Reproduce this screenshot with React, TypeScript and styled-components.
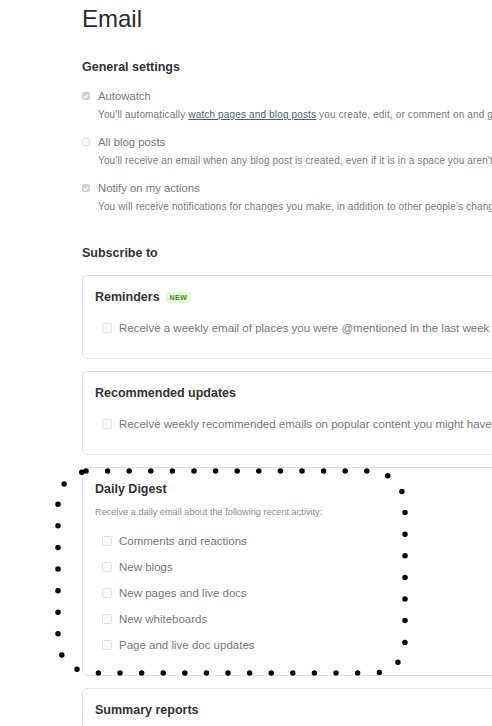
import React from "react";
import styled, { createGlobalStyle } from "styled-components";

const Global = createGlobalStyle`
  html, body { margin: 0; padding: 0; background: #ffffff; overflow: hidden; }
  body { font-family: "Liberation Sans", Arial, Helvetica, sans-serif; }
  * { box-sizing: border-box; }
`;

const Page = styled.div`
  position: relative;
  width: 492px;
  height: 726px;
  overflow: hidden;
  padding: 5px 0 0 82px;
`;

const Content = styled.div`
  width: 470px;
  display: flex;
  flex-direction: column;
`;

const Title = styled.h1`
  margin: 0;
  font-size: 24px;
  line-height: 28px;
  font-weight: 400;
  color: #2b2b2b;
`;

const SectionTitle = styled.h2<{ $mt: number }>`
  margin: ${(p) => p.$mt}px 0 0;
  font-size: 12.5px;
  line-height: 16px;
  font-weight: 700;
  color: #333333;
`;

const SettingList = styled.div`
  margin-top: 14px;
  display: flex;
  flex-direction: column;
  gap: 14px;
`;

const Setting = styled.div`
  display: flex;
  flex-direction: column;
  gap: 6px;
`;

const CheckRow = styled.label<{ $gap: number; $size: number }>`
  display: flex;
  align-items: center;
  gap: ${(p) => p.$gap}px;
  font-size: ${(p) => p.$size}px;
  line-height: 14px;
  color: #777777;
  white-space: nowrap;
`;

const Box = styled.span<{ $checked?: boolean; $size: number }>`
  flex: none;
  width: ${(p) => p.$size}px;
  height: ${(p) => p.$size}px;
  border-radius: 2px;
  border: 1px solid ${(p) => (p.$checked ? "#cfcfcf" : "#e2e2e2")};
  background: ${(p) => (p.$checked ? "#d4d4d4" : "#fafafa")};
  display: flex;
  align-items: center;
  justify-content: center;
`;

const Desc = styled.div<{ $indent: number }>`
  padding-left: ${(p) => p.$indent}px;
  font-size: 10px;
  letter-spacing: 0.15px;
  line-height: 12px;
  color: #7a7a7a;
  white-space: nowrap;
`;

const Link = styled.a`
  color: #4d5b82;
  text-decoration: underline;
`;

const Cards = styled.div`
  margin-top: 14px;
  display: flex;
  flex-direction: column;
  gap: 12px;
`;

const Card = styled.div<{ $pb: number }>`
  border: 1px solid #e3e3e3;
  border-radius: 5px;
  padding: 13px 12px ${(p) => p.$pb}px 12px;
  display: flex;
  flex-direction: column;
`;

const CardTitle = styled.div`
  display: flex;
  align-items: center;
  gap: 6px;
  font-size: 12.5px;
  line-height: 16px;
  font-weight: 700;
  color: #333333;
`;

const Badge = styled.span`
  background: #e4f9d4;
  color: #3f8a2a;
  font-size: 7px;
  line-height: 11px;
  font-weight: 700;
  letter-spacing: 0.4px;
  padding: 0 4px;
  border-radius: 2px;
`;

const CardSub = styled.div`
  margin-top: 9px;
  font-size: 9.2px;
  line-height: 12px;
  color: #8a8a8a;
  white-space: nowrap;
`;

const CardItems = styled.div<{ $mt: number }>`
  margin-top: ${(p) => p.$mt}px;
  padding-left: 7px;
  display: flex;
  flex-direction: column;
  gap: 12px;
`;

const Overlay = styled.svg`
  position: absolute;
  left: 0;
  top: 0;
  pointer-events: none;
`;

const Check = () => (
  <svg width="7" height="7" viewBox="0 0 10 10">
    <path d="M2 5.2 L4.2 7.4 L8.2 2.8" fill="none" stroke="#ffffff" strokeWidth="1.8" strokeLinecap="round" strokeLinejoin="round" />
  </svg>
);

const SmallCheck = ({ checked, children }: { checked?: boolean; children: React.ReactNode }) => (
  <CheckRow $gap={8} $size={11.3}>
    <Box $checked={checked} $size={8}>{checked && <Check />}</Box>
    <span>{children}</span>
  </CheckRow>
);

const CardCheck = ({ children }: { children: React.ReactNode }) => (
  <CheckRow $gap={7} $size={11.5}>
    <Box $size={10} />
    <span>{children}</span>
  </CheckRow>
);

const digestItems = [
  "Comments and reactions",
  "New blogs",
  "New pages and live docs",
  "New whiteboards",
  "Page and live doc updates",
];

export default function App() {
  return (
    <>
      <Global />
      <Page>
        <Content>
          <Title>Email</Title>
          <SectionTitle $mt={26}>General settings</SectionTitle>
          <SettingList>
            <Setting>
              <SmallCheck checked>Autowatch</SmallCheck>
              <Desc $indent={16}>
                You'll automatically <Link>watch pages and blog posts</Link> you create, edit, or comment on and get notified
              </Desc>
            </Setting>
            <Setting>
              <SmallCheck>All blog posts</SmallCheck>
              <Desc $indent={16}>
                You'll receive an email when any blog post is created, even if it is in a space you aren't watching
              </Desc>
            </Setting>
            <Setting>
              <SmallCheck checked>Notify on my actions</SmallCheck>
              <Desc $indent={16}>
                You will receive notifications for changes you make, in addition to other people's changes
              </Desc>
            </Setting>
          </SettingList>
          <SectionTitle $mt={32}>Subscribe to</SectionTitle>
          <Cards>
            <Card $pb={23}>
              <CardTitle>
                Reminders <Badge>NEW</Badge>
              </CardTitle>
              <CardItems $mt={16}>
                <CardCheck>Receive a weekly email of places you were @mentioned in the last week</CardCheck>
              </CardItems>
            </Card>
            <Card $pb={23}>
              <CardTitle>Recommended updates</CardTitle>
              <CardItems $mt={16}>
                <CardCheck>Receive weekly recommended emails on popular content you might have missed</CardCheck>
              </CardItems>
            </Card>
            <Card $pb={23}>
              <CardTitle>Daily Digest</CardTitle>
              <CardSub>Receive a daily email about the following recent activity:</CardSub>
              <CardItems $mt={16}>
                {digestItems.map((t) => (
                  <CardCheck key={t}>{t}</CardCheck>
                ))}
              </CardItems>
            </Card>
            <Card $pb={23}>
              <CardTitle>Summary reports</CardTitle>
            </Card>
          </Cards>
        </Content>
        <Overlay width="492" height="726" viewBox="0 0 492 726">
          <path
            d="M86 471 L367 471 Q394 471 403 494 L405 500 L405 640 Q405 668 377 673 L96 673 Q66 672 60 650 L58 640 L58 500 Q60 478 86 471 Z"
            fill="none"
            stroke="#000000"
            strokeWidth="5.5"
            strokeLinecap="round"
            strokeDasharray="0 21.6"
          />
        </Overlay>
      </Page>
    </>
  );
}
